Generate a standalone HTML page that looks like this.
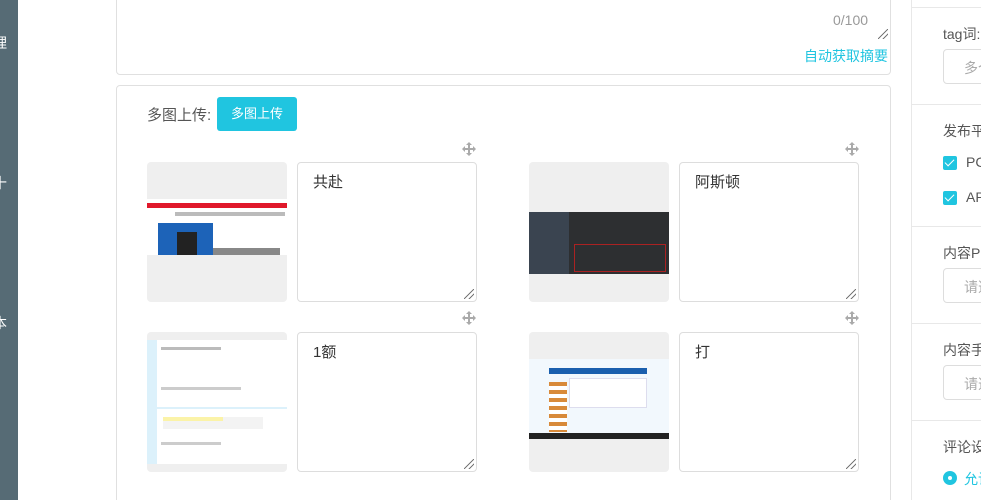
<!DOCTYPE html>
<html><head><meta charset="utf-8"><style>
*{margin:0;padding:0;box-sizing:border-box}
html{width:981px;height:500px;overflow:hidden}
body{width:981px;height:500px;overflow:hidden;background:#fff;position:relative;font-family:"Liberation Sans","Noto Sans CJK SC",sans-serif;font-size:14px;color:#333}
.a{position:absolute}
.side{left:0;top:0;width:18px;height:500px;background:#566b75;color:#fff;overflow:hidden}
.side span{position:absolute;left:-7px;font-size:14px}
.card{border:1px solid #e0e0e0;border-radius:4px;background:#fff}
.img{background:#efefef;border-radius:4px;overflow:hidden;width:140px;height:140px}
.ta{width:180px;height:140px;border:1px solid #ddd;border-radius:4px;padding:8px 15px;font-size:15px;color:#333}
.grip{width:10px;height:10px;right:2px;bottom:2px;background:linear-gradient(135deg,transparent 45%,#777 46%,#777 54%,transparent 55%,transparent 70%,#777 71%,#777 79%,transparent 80%)}
.mv{width:16px;height:16px;color:#999}
.rp{left:911px;top:0;width:70px;height:500px;border-left:1px solid #e8e8e8;background:#fff}
.rl{left:943px;color:#555;font-size:14px;white-space:nowrap}
.hr{left:912px;width:69px;height:1px;background:#e8e8e8}
.inp{left:943px;width:60px;height:35px;border:1px solid #ddd;border-radius:4px;color:#aaa;padding:8px 20px;white-space:nowrap;font-size:14px}
.cb{left:943px;width:14px;height:14px;background:#20c5e0;border-radius:2px}
.cb:after{content:"";position:absolute;left:4px;top:1px;width:4px;height:8px;border:solid #fff;border-width:0 1.5px 1.5px 0;transform:rotate(45deg)}
</style></head><body>
<div class="a side"><span style="top:33px">理</span><span style="top:173px">十</span><span style="top:313px">本</span></div>

<div class="a card" style="left:116px;top:-10px;width:775px;height:85px"></div>
<div class="a" style="left:833px;top:12px;color:#999;font-size:14px">0/100</div>
<div class="a grip" style="left:878px;top:29px;right:auto;bottom:auto"></div>
<div class="a" style="left:804px;top:46px;color:#20c5e0;font-size:14px">自动获取摘要</div>

<div class="a card" style="left:116px;top:85px;width:775px;height:420px"></div>
<div class="a" style="left:147px;top:104px;color:#555;font-size:15px">多图上传:</div>
<div class="a" style="left:217px;top:97px;width:80px;height:34px;background:#20c5e0;border-radius:3px;color:#fff;font-size:13px;line-height:34px;text-align:center">多图上传</div>

<svg class="a mv" style="left:461px;top:141px" viewBox="0 0 16 16"><path d="M8 1L5 4h2v3H4V5L1 8l3 3V9h3v3H5l3 3 3-3H9V9h3v2l3-3-3-3v2H9V4h2z" fill="#aaa"/></svg>
<svg class="a mv" style="left:844px;top:141px" viewBox="0 0 16 16"><path d="M8 1L5 4h2v3H4V5L1 8l3 3V9h3v3H5l3 3 3-3H9V9h3v2l3-3-3-3v2H9V4h2z" fill="#aaa"/></svg>
<svg class="a mv" style="left:461px;top:310px" viewBox="0 0 16 16"><path d="M8 1L5 4h2v3H4V5L1 8l3 3V9h3v3H5l3 3 3-3H9V9h3v2l3-3-3-3v2H9V4h2z" fill="#aaa"/></svg>
<svg class="a mv" style="left:844px;top:310px" viewBox="0 0 16 16"><path d="M8 1L5 4h2v3H4V5L1 8l3 3V9h3v3H5l3 3 3-3H9V9h3v2l3-3-3-3v2H9V4h2z" fill="#aaa"/></svg>

<div class="a img" style="left:147px;top:162px">
 <div class="a" style="left:0;top:37px;width:140px;height:18px;background:#fff"></div>
 <div class="a" style="left:0;top:41px;width:140px;height:5px;background:#e0182b"></div>
 <div class="a" style="left:0;top:46px;width:140px;height:47px;background:#fff"></div>
 <div class="a" style="left:28px;top:50px;width:110px;height:4px;background:#bbb"></div>
 <div class="a" style="left:11px;top:61px;width:55px;height:32px;background:#1d63b8"></div>
 <div class="a" style="left:30px;top:70px;width:20px;height:23px;background:#222"></div>
 <div class="a" style="left:66px;top:86px;width:67px;height:7px;background:#888"></div>
</div>
<div class="a ta" style="left:297px;top:162px">共赴<div class="a grip"></div></div>

<div class="a img" style="left:529px;top:162px">
 <div class="a" style="left:0;top:50px;width:140px;height:62px;background:#2d2f31"></div>
 <div class="a" style="left:0;top:50px;width:40px;height:62px;background:#3a4450"></div>
 <div class="a" style="left:45px;top:82px;width:92px;height:28px;border:1px solid #a22"></div>
</div>
<div class="a ta" style="left:679px;top:162px">阿斯顿<div class="a grip"></div></div>

<div class="a img" style="left:147px;top:332px">
 <div class="a" style="left:0;top:8px;width:140px;height:124px;background:#fff"></div>
 <div class="a" style="left:0;top:8px;width:10px;height:124px;background:#dcf1fb"></div>
 <div class="a" style="left:14px;top:15px;width:60px;height:3px;background:#bbb"></div>
 <div class="a" style="left:14px;top:55px;width:80px;height:3px;background:#ccc"></div>
 <div class="a" style="left:0;top:75px;width:140px;height:2px;background:#dcf1fb"></div>
 <div class="a" style="left:16px;top:85px;width:100px;height:12px;background:#f3f3f3"></div>
 <div class="a" style="left:16px;top:85px;width:60px;height:4px;background:#fbf3a8"></div>
 <div class="a" style="left:14px;top:110px;width:60px;height:3px;background:#ccc"></div>
</div>
<div class="a ta" style="left:297px;top:332px">1额<div class="a grip"></div></div>

<div class="a img" style="left:529px;top:332px">
 <div class="a" style="left:0;top:27px;width:140px;height:80px;background:#f2f8fd"></div>
 <div class="a" style="left:20px;top:36px;width:98px;height:6px;background:#1a5fae"></div>
 <div class="a" style="left:40px;top:46px;width:78px;height:30px;background:#fff;border:1px solid #dde"></div>
 <div class="a" style="left:20px;top:50px;width:18px;height:50px;background:repeating-linear-gradient(#d88a3a 0 4px,#fff 4px 8px)"></div>
 <div class="a" style="left:0;top:101px;width:140px;height:6px;background:#222"></div>
</div>
<div class="a ta" style="left:679px;top:332px">打<div class="a grip"></div></div>

<div class="a rp"></div>
<div class="a hr" style="top:7px"></div>
<div class="a rl" style="top:24px">tag词:</div>
<div class="a inp" style="top:49px">多个</div>
<div class="a hr" style="top:104px"></div>
<div class="a rl" style="top:121px">发布平</div>
<div class="a cb" style="top:156px"></div><div class="a rl" style="left:966px;top:154px">PC</div>
<div class="a cb" style="top:191px"></div><div class="a rl" style="left:966px;top:189px">AP</div>
<div class="a hr" style="top:226px"></div>
<div class="a rl" style="top:243px">内容PC</div>
<div class="a inp" style="top:268px">请选</div>
<div class="a hr" style="top:323px"></div>
<div class="a rl" style="top:340px">内容手</div>
<div class="a inp" style="top:365px">请选</div>
<div class="a hr" style="top:420px"></div>
<div class="a rl" style="top:437px">评论设</div>
<div class="a" style="left:943px;top:471px;width:14px;height:14px;border-radius:50%;background:#20c5e0"><div class="a" style="left:5px;top:5px;width:4px;height:4px;border-radius:50%;background:#fff"></div></div>
<div class="a rl" style="left:964px;top:469px;color:#20c5e0">允许</div>
</body></html>
